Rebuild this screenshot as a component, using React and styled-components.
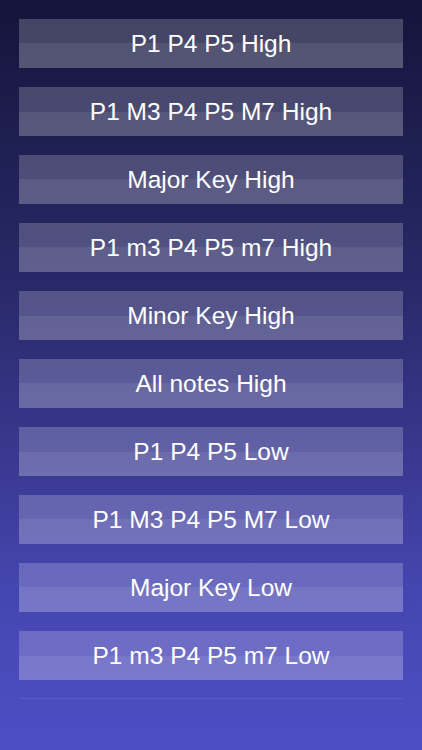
import React from 'react';
import styled, { createGlobalStyle } from 'styled-components';

const GlobalStyle = createGlobalStyle`
  html, body {
    margin: 0;
    padding: 0;
  }
  body {
    font-family: "Liberation Sans", Arial, sans-serif;
    background: #4e4ec4;
  }
`;

const Screen = styled.div`
  width: 422px;
  height: 750px;
  overflow: hidden;
  background: linear-gradient(180deg, #14153a 0%, #2a2a6c 40%, #4646b2 80%, #4e4ec4 100%);
`;

const List = styled.div`
  display: flex;
  flex-direction: column;
  gap: 19px;
  margin: 0 19px;
  padding: 19px 0 18px;
  border-bottom: 1px solid rgba(255, 255, 255, 0.08);
`;

const ScaleButton = styled.button`
  display: flex;
  align-items: center;
  justify-content: center;
  height: 49px;
  width: 100%;
  padding: 0;
  border: none;
  color: #ffffff;
  font-family: "Liberation Sans", Arial, sans-serif;
  font-size: 24.5px;
  cursor: pointer;
  background: linear-gradient(
    180deg,
    rgba(255, 255, 255, 0.2) 0%,
    rgba(255, 255, 255, 0.2) 50%,
    rgba(255, 255, 255, 0.26) 50%,
    rgba(255, 255, 255, 0.26) 100%
  );
`;

const scales = [
  'P1 P4 P5 High',
  'P1 M3 P4 P5 M7 High',
  'Major Key High',
  'P1 m3 P4 P5 m7 High',
  'Minor Key High',
  'All notes High',
  'P1 P4 P5 Low',
  'P1 M3 P4 P5 M7 Low',
  'Major Key Low',
  'P1 m3 P4 P5 m7 Low',
];

export default function App() {
  return (
    <>
      <GlobalStyle />
      <Screen>
        <List>
          {scales.map(s => (
            <ScaleButton key={s}>{s}</ScaleButton>
          ))}
        </List>
      </Screen>
    </>
  );
}
